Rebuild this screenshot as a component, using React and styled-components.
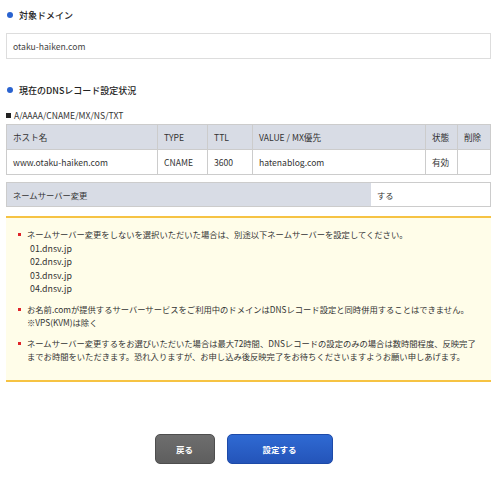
import React from 'react'
import styled, { createGlobalStyle } from 'styled-components'

const Global = createGlobalStyle`
  body {
    margin: 0;
    background: #fff;
    font-family: "Noto Sans CJK JP", "Noto Sans", sans-serif;
    color: #333;
    font-size: 8.3px;
  }
`

const Page = styled.div`
  width: 485px;
  padding: 8px 0 0 6px;
`

const Heading = styled.h2`
  display: flex;
  align-items: center;
  gap: 6px;
  margin: 0;
  height: 14px;
  font-size: 9px;
  font-weight: 500;
  color: #222;
  padding-left: 1px;
  &::before {
    content: '';
    width: 6px;
    height: 6px;
    border-radius: 50%;
    background: #2a63d0;
  }
`

const DomainBox = styled.div`
  margin-top: 11px;
  height: 24px;
  border: 1px solid #ddd;
  display: flex;
  align-items: center;
  padding-left: 6px;
  font-size: 8.6px;
  color: #444;
`

const Section = styled.div`
  margin-top: ${(p) => p.top}px;
`

const SubLabel = styled.div`
  display: flex;
  align-items: center;
  gap: 3px;
  height: 12px;
  margin-top: 12px;
  color: #333;
  font-size: 8.6px;
  &::before {
    content: '';
    width: 5px;
    height: 5px;
    background: #222;
  }
`

const Table = styled.table`
  width: 100%;
  border-collapse: collapse;
  margin-top: 3px;
  font-size: 8.6px;
  th, td {
    border: 1px solid #ccc;
    height: 24px;
    padding: 0 0 0 6px;
    text-align: left;
    font-weight: 400;
    white-space: nowrap;
  }
  th {
    background: #d8dce5;
  }
`

const NsRow = styled.div`
  display: grid;
  grid-template-columns: 364px 1fr;
  margin-top: 7px;
  height: 23px;
  border: 1px solid #ccc;
`

const NsCell = styled.div`
  display: flex;
  align-items: center;
  padding-left: 6px;
  background: ${(p) => (p.head ? '#d8dce5' : '#fff')};
`

const Notice = styled.div`
  margin-top: 9px;
  background: #fffde9;
  border-top: 2px solid #f6c343;
  border-bottom: 2px solid #f6c343;
  padding: 10px 10px 16px 12px;
  line-height: 13.5px;
`

const Item = styled.div`
  position: relative;
  padding-left: 9px;
  margin-bottom: 7px;
  &:last-child {
    margin-bottom: 0;
  }
  &::before {
    content: '';
    position: absolute;
    left: 0;
    top: 5px;
    width: 3px;
    height: 3px;
    background: #e0242a;
  }
`

const Indent = styled.div`
  padding-left: 3px;
  font-size: 8.8px;
`

const Buttons = styled.div`
  display: flex;
  justify-content: center;
  gap: 12px;
  margin-top: 52px;
  padding-right: 10px;
`

const Button = styled.button`
  width: ${(p) => p.w}px;
  height: 30px;
  border: 1px solid ${(p) => (p.primary ? '#1d4aa8' : '#4e4e4e')};
  border-radius: 5px;
  background: ${(p) =>
    p.primary
      ? 'linear-gradient(#2f6ad3, #2454b9)'
      : 'linear-gradient(#6e6e6e, #5e5e5e)'};
  color: #fff;
  font-family: inherit;
  font-size: 8.5px;
  font-weight: 700;
`

const nameservers = ['01.dnsv.jp', '02.dnsv.jp', '03.dnsv.jp', '04.dnsv.jp']

export default function App() {
  return (
    <Page>
      <Global />
      <Heading>対象ドメイン</Heading>
      <DomainBox>otaku-haiken.com</DomainBox>
      <Section top={24}>
        <Heading>現在のDNSレコード設定状況</Heading>
      </Section>
      <SubLabel>A/AAAA/CNAME/MX/NS/TXT</SubLabel>
      <Table>
        <colgroup>
          <col style={{ width: 151 }} />
          <col style={{ width: 50 }} />
          <col style={{ width: 45 }} />
          <col style={{ width: 173 }} />
          <col style={{ width: 32 }} />
          <col />
        </colgroup>
        <thead>
          <tr>
            <th>ホスト名</th>
            <th>TYPE</th>
            <th>TTL</th>
            <th>VALUE / MX優先</th>
            <th>状態</th>
            <th>削除</th>
          </tr>
        </thead>
        <tbody>
          <tr>
            <td>www.otaku-haiken.com</td>
            <td>CNAME</td>
            <td>3600</td>
            <td>hatenablog.com</td>
            <td>有効</td>
            <td></td>
          </tr>
        </tbody>
      </Table>
      <NsRow>
        <NsCell head>ネームサーバー変更</NsCell>
        <NsCell>する</NsCell>
      </NsRow>
      <Notice>
        <Item>
          ネームサーバー変更をしないを選択いただいた場合は、別途以下ネームサーバーを設定してください。
          {nameservers.map((n) => (
            <Indent key={n}>{n}</Indent>
          ))}
        </Item>
        <Item>
          お名前.comが提供するサーバーサービスをご利用中のドメインはDNSレコード設定と同時併用することはできません。
          <div>※VPS(KVM)は除く</div>
        </Item>
        <Item>
          ネームサーバー変更するをお選びいただいた場合は最大72時間、DNSレコードの設定のみの場合は数時間程度、反映完了までお時間をいただきます。恐れ入りますが、お申し込み後反映完了をお待ちくださいますようお願い申しあげます。
        </Item>
      </Notice>
      <Buttons>
        <Button w={60}>戻る</Button>
        <Button w={106} primary>設定する</Button>
      </Buttons>
    </Page>
  )
}
